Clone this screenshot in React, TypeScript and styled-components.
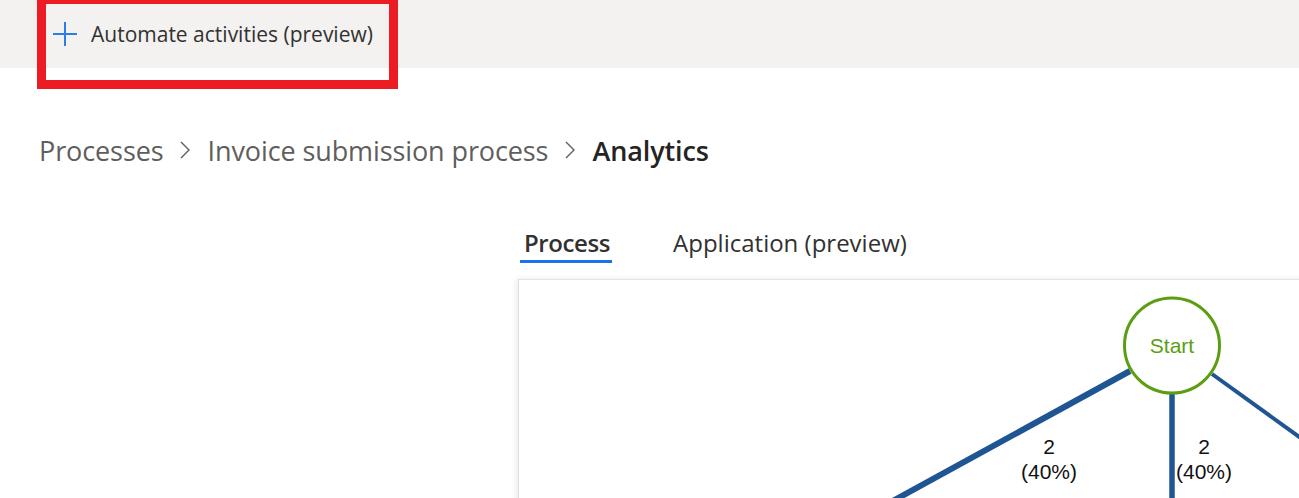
import React from "react";
import styled, { createGlobalStyle } from "styled-components";

const Global = createGlobalStyle`
  html, body { margin: 0; padding: 0; background: #ffffff; }
  body { font-family: "Open Sans", "Noto Sans", sans-serif; }
`;

const Page = styled.div`
  position: relative;
  width: 1299px;
  height: 498px;
  overflow: hidden;
  background: #ffffff;
`;

const CommandBar = styled.div`
  height: 68px;
  background: #f3f2f1;
  display: flex;
  align-items: center;
  padding-left: 52px;
  box-sizing: border-box;
`;

const CommandButton = styled.button`
  display: flex;
  align-items: center;
  gap: 13px;
  border: none;
  background: transparent;
  padding: 0;
  margin-top: 0;
  font-family: "Open Sans", "Noto Sans", sans-serif;
  font-size: 21px;
  color: #323130;
  cursor: pointer;
`;

const Highlight = styled.div`
  position: absolute;
  left: 37px;
  top: -5px;
  width: 361px;
  height: 94px;
  border: 9px solid #ec1c24;
  box-sizing: border-box;
  pointer-events: none;
`;

const Breadcrumb = styled.nav`
  display: flex;
  align-items: center;
  gap: 16px;
  padding-left: 39px;
  margin-top: 62px;
  height: 40px;
  font-family: "Open Sans", "Noto Sans", sans-serif;
  font-size: 27px;
`;

const Crumb = styled.span<{ $current?: boolean }>`
  color: ${(p) => (p.$current ? "#252423" : "#605e5c")};
  font-weight: ${(p) => (p.$current ? 600 : 400)};
  letter-spacing: -0.1px;
`;

const Tabs = styled.div`
  display: flex;
  gap: 57px;
  margin-left: 520px;
  margin-top: 58px;
`;

const Tab = styled.div<{ $active?: boolean }>`
  padding: 0 2px 0 4px;
  font-family: "Open Sans", "Noto Sans", sans-serif;
  font-size: 24px;
  font-weight: ${(p) => (p.$active ? 600 : 400)};
  letter-spacing: ${(p) => (p.$active ? "-0.4px" : "0")};
  color: #323130;
  line-height: 30px;
  height: 32px;
  border-bottom: 3px solid ${(p) => (p.$active ? "#1a73e8" : "transparent")};
`;

const Card = styled.div`
  margin-left: 518px;
  margin-top: 16px;
  width: 820px;
  height: 260px;
  background: #ffffff;
  border: 1px solid #e4e2e0;
  box-shadow: -2px 0 6px rgba(0, 0, 0, 0.08);
  box-sizing: border-box;
`;

const Diagram = styled.svg`
  display: block;
`;

const NodeLabel = styled.text`
  font-family: "Liberation Sans", Arial, sans-serif;
  font-size: 21px;
`;

const PlusIcon = () => (
  <svg width="26" height="26" viewBox="0 0 26 26">
    <path d="M13 1 V25 M1 13 H25" stroke="#2b7de9" strokeWidth="2" fill="none" />
  </svg>
);

const Chevron = () => (
  <svg width="12" height="22" viewBox="0 0 12 22">
    <path d="M2 3 L10 11 L2 19" stroke="#605e5c" strokeWidth="1.4" fill="none" />
  </svg>
);

export default function App() {
  // Diagram coordinates: svg origin at page (519, 280)
  const ox = 519;
  const oy = 280;
  const cx = 1172 - ox;
  const cy = 345.5 - oy;
  return (
    <>
      <Global />
      <Page>
        <CommandBar>
          <CommandButton>
            <PlusIcon />
            <span>Automate activities (preview)</span>
          </CommandButton>
        </CommandBar>
        <Highlight />
        <Breadcrumb>
          <Crumb>Processes</Crumb>
          <Chevron />
          <Crumb>Invoice submission process</Crumb>
          <Chevron />
          <Crumb $current>Analytics</Crumb>
        </Breadcrumb>
        <Tabs>
          <Tab $active>Process</Tab>
          <Tab>Application (preview)</Tab>
        </Tabs>
        <Card>
          <Diagram width="820" height="260" viewBox="0 0 820 260">
            <line x1={1130 - ox} y1={371 - oy} x2={880 - ox} y2={508 - oy} stroke="#1f5593" strokeWidth="6" />
            <line x1={cx} y1={394 - oy} x2={cx} y2={520 - oy} stroke="#1f5593" strokeWidth="5.5" />
            <line x1={1212 - ox} y1={374 - oy} x2={1320 - ox} y2={452 - oy} stroke="#1f5593" strokeWidth="4" />
            <circle cx={cx} cy={cy} r={47.5} fill="#ffffff" stroke="#5c9e12" strokeWidth="3" />
            <NodeLabel x={cx} y={cy + 7} textAnchor="middle" fill="#5c9e12">Start</NodeLabel>
            <NodeLabel x={1049 - ox} y={454 - oy} textAnchor="middle" fill="#111">2</NodeLabel>
            <NodeLabel x={1049 - ox} y={479 - oy} textAnchor="middle" fill="#111">(40%)</NodeLabel>
            <NodeLabel x={1204 - ox} y={454 - oy} textAnchor="middle" fill="#111">2</NodeLabel>
            <NodeLabel x={1204 - ox} y={479 - oy} textAnchor="middle" fill="#111">(40%)</NodeLabel>
          </Diagram>
        </Card>
      </Page>
    </>
  );
}
